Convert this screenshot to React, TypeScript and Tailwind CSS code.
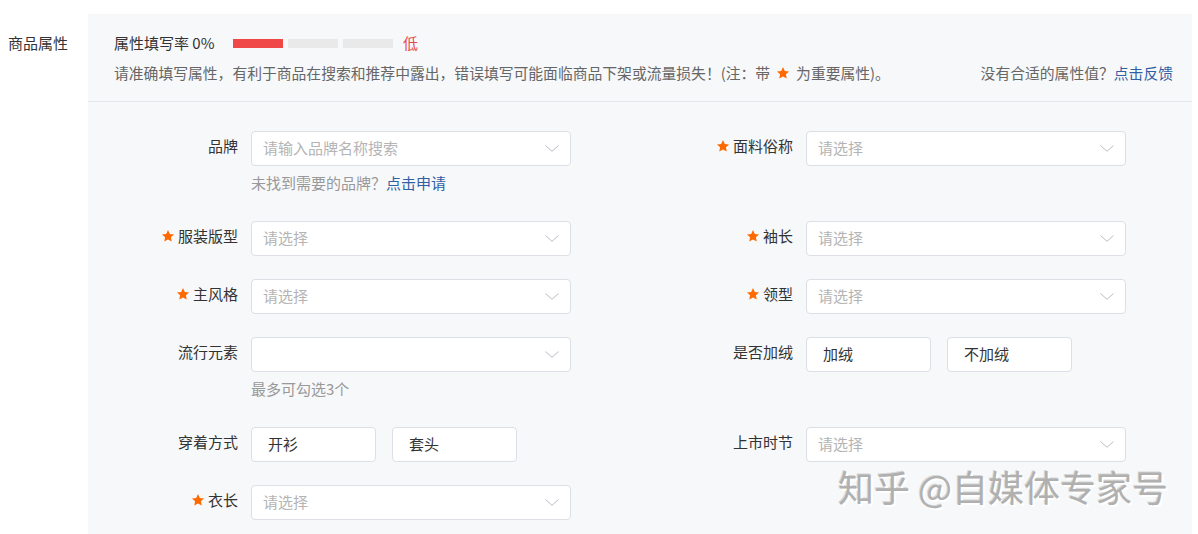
import React from 'react';

const font = { fontFamily: '"Microsoft YaHei", "Noto Sans CJK SC", "Noto Sans", sans-serif' };

function Star({ size = 13 }: { size?: number }) {
  return (
    <svg width={size} height={size} viewBox="0 0 24 24" className="inline-block shrink-0">
      <path
        d="M12 1.8l3.1 6.6 7.2.9-5.3 5 1.4 7.1L12 17.9l-6.4 3.5 1.4-7.1-5.3-5 7.2-.9z"
        fill="#ff6a00"
      />
    </svg>
  );
}

function Chevron() {
  return (
    <svg width="14" height="7" viewBox="0 0 14 7" className="shrink-0">
      <polyline points="0.5,0.5 7,6.3 13.5,0.5" fill="none" stroke="#b8bcc4" strokeWidth="1" />
    </svg>
  );
}

function Select({ placeholder }: { placeholder?: string }) {
  return (
    <div className="flex h-[35px] w-[320px] items-center justify-between rounded-[4px] border border-[#dcdfe6] bg-white pl-[11px] pr-[11px]">
      <span className="text-[15px] text-[#b4b4b4]">{placeholder}</span>
      <Chevron />
    </div>
  );
}

function Choice({ text }: { text: string }) {
  return (
    <div className="flex h-[35px] w-[125px] items-center rounded-[4px] border border-[#dcdfe6] bg-white pl-4 text-[15px] text-[#333]">
      {text}
    </div>
  );
}

function Field({
  label,
  star,
  children,
  hint,
}: {
  label: string;
  star?: boolean;
  children: React.ReactNode;
  hint?: React.ReactNode;
}) {
  return (
    <div className="flex items-start">
      <div className="flex w-[163px] items-center justify-end gap-[3px] pr-[13px] pt-[5px] text-[15px] leading-5 text-[#333]">
        {star && <Star size={14} />}
        <span>{label}</span>
      </div>
      <div className="flex flex-col">
        {children}
        {hint && <div className="pb-[5px] pt-[7px] text-[15px] leading-5 text-[#999]">{hint}</div>}
      </div>
    </div>
  );
}

export default function App() {
  return (
    <div className="flex min-h-[534px] bg-white pr-[6px] pt-[14px]" style={font}>
      <div className="w-[88px] shrink-0 pl-2 pt-[19px] text-[15px] leading-5 text-[#333]">商品属性</div>

      <div className="relative flex-1 bg-[#f7f8fa]">
        <div className="border-b border-[#e6e7ea] pb-[18px] pl-[26px] pr-[19px] pt-[19px]">
          <div className="flex items-center text-[15px] leading-5 text-[#333]">
            <span className="w-[119px]">属性填写率 0%</span>
            <div className="flex gap-[5px]">
              <div className="h-[9px] w-[50px] bg-[#f04848]" />
              <div className="h-[9px] w-[50px] bg-[#e9e9e9]" />
              <div className="h-[9px] w-[50px] bg-[#e9e9e9]" />
            </div>
            <span className="ml-[10px] text-[#e5484d]">低</span>
          </div>
          <div className="mt-[10px] flex items-center justify-between text-[14.8px] leading-5 text-[#666]">
            <span className="flex items-center">
              请准确填写属性，有利于商品在搜索和推荐中露出，错误填写可能面临商品下架或流量损失！(注：带
              <span className="mx-[6px] inline-flex">
                <Star size={14} />
              </span>
              为重要属性)。
            </span>
            <span>
              没有合适的属性值？<span className="text-[#2f5fa5]">点击反馈</span>
            </span>
          </div>
        </div>

        <div className="grid grid-cols-[496px_483px] gap-x-[59px] gap-y-[23px] pb-4 pt-[29px]">
          <Field
            label="品牌"
            hint={
              <>
                未找到需要的品牌？<span className="text-[#2f5fa5]">点击申请</span>
              </>
            }
          >
            <Select placeholder="请输入品牌名称搜索" />
          </Field>
          <Field label="面料俗称" star>
            <Select placeholder="请选择" />
          </Field>

          <Field label="服装版型" star>
            <Select placeholder="请选择" />
          </Field>
          <Field label="袖长" star>
            <Select placeholder="请选择" />
          </Field>

          <Field label="主风格" star>
            <Select placeholder="请选择" />
          </Field>
          <Field label="领型" star>
            <Select placeholder="请选择" />
          </Field>

          <Field label="流行元素" hint="最多可勾选3个">
            <Select />
          </Field>
          <Field label="是否加绒">
            <div className="flex gap-4">
              <Choice text="加绒" />
              <Choice text="不加绒" />
            </div>
          </Field>

          <Field label="穿着方式">
            <div className="flex gap-4">
              <Choice text="开衫" />
              <Choice text="套头" />
            </div>
          </Field>
          <Field label="上市时节">
            <Select placeholder="请选择" />
          </Field>

          <Field label="衣长" star>
            <Select placeholder="请选择" />
          </Field>
        </div>

        <div
          className="pointer-events-none absolute left-[750px] top-[454px] whitespace-nowrap text-[36px] leading-9 text-[#b0b0b0]"
          style={{ textShadow: '2px 2px 0 #ffffff, -1px -1px 0 #d8d8d8' }}
        >
          知乎 @自媒体专家号
        </div>
      </div>
    </div>
  );
}
